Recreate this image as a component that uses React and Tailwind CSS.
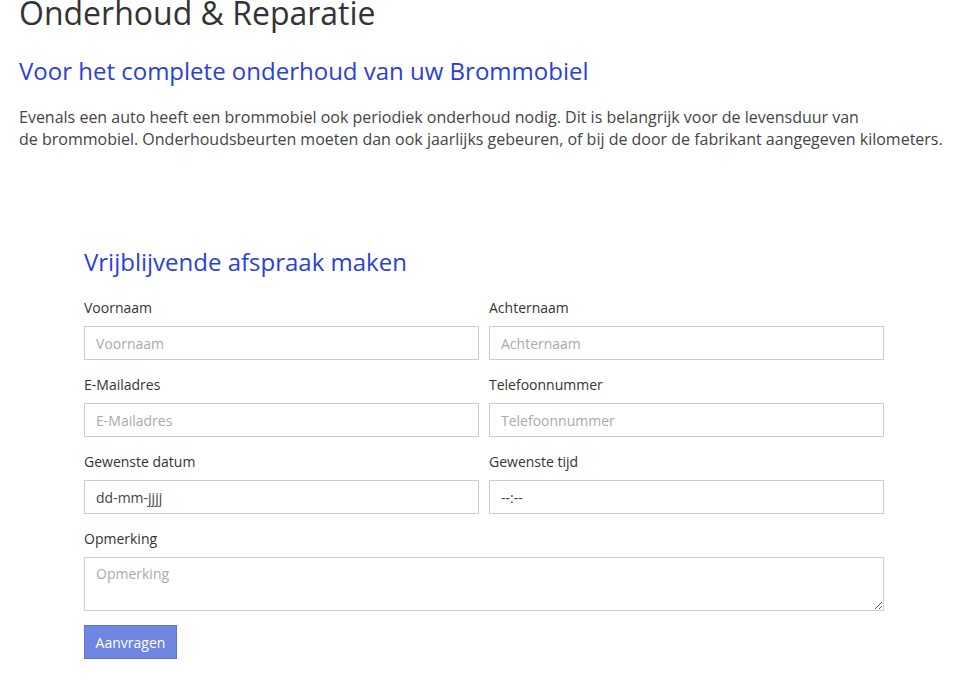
import React from 'react';

const Field = ({ label, placeholder, value }) => (
    <div className="flex flex-col">
        <label className="text-[14px] leading-[20px] text-[#333] mb-[8px]">{label}</label>
        <input
            type="text"
            placeholder={placeholder}
            defaultValue={value}
            className="h-[34px] w-full border border-[#ccc] bg-white px-[11px] text-[14px] text-[#444] placeholder:text-[#aaa] outline-none"
        />
    </div>
);

const App = () => {
    return (
        <div className="min-h-[699px] bg-white pl-[19px] font-['Open_Sans',sans-serif] overflow-hidden">
            {/* Page header */}
            <h1 className="-mt-[4px] text-[32px] leading-[33px] font-normal text-[#333]">
                Onderhoud &amp; Reparatie
            </h1>
            <h2 className="mt-[29px] text-[24px] leading-[26px] font-normal text-[#2a3fd6]">
                Voor het complete onderhoud van uw Brommobiel
            </h2>
            <p className="mt-[22px] whitespace-nowrap text-[16px] leading-[22px] text-[#444]">
                Evenals een auto heeft een brommobiel ook periodiek onderhoud nodig. Dit is belangrijk voor de levensduur van
                <br />
                de brommobiel. Onderhoudsbeurten moeten dan ook jaarlijks gebeuren, of bij de door de fabrikant aangegeven kilometers.
            </p>

            {/* Form */}
            <div className="ml-[65px] mt-[99px] w-[800px]">
                <h3 className="text-[24px] leading-[26px] font-normal text-[#2a3fd6]">
                    Vrijblijvende afspraak maken
                </h3>
                <form className="mt-[23px]" onSubmit={(e) => e.preventDefault()}>
                    <div className="grid grid-cols-2 gap-x-[10px] gap-y-[15px]">
                        <Field label="Voornaam" placeholder="Voornaam" />
                        <Field label="Achternaam" placeholder="Achternaam" />
                        <Field label="E-Mailadres" placeholder="E-Mailadres" />
                        <Field label="Telefoonnummer" placeholder="Telefoonnummer" />
                        <Field label="Gewenste datum" value="dd-mm-jjjj" />
                        <Field label="Gewenste tijd" value="--:--" />
                        <div className="col-span-2 flex flex-col">
                            <label className="text-[14px] leading-[20px] text-[#333] mb-[8px]">Opmerking</label>
                            <textarea
                                placeholder="Opmerking"
                                className="block h-[54px] w-full border border-[#ccc] bg-white px-[11px] py-[6px] text-[14px] leading-[20px] text-[#444] placeholder:text-[#aaa] outline-none"
                            />
                        </div>
                    </div>
                    <button
                        type="submit"
                        className="mt-[14px] h-[34px] w-[93px] border border-[#5f74d6] bg-[#6f86e0] text-[14px] text-white"
                    >
                        Aanvragen
                    </button>
                </form>
            </div>
        </div>
    );
};

export default App;
